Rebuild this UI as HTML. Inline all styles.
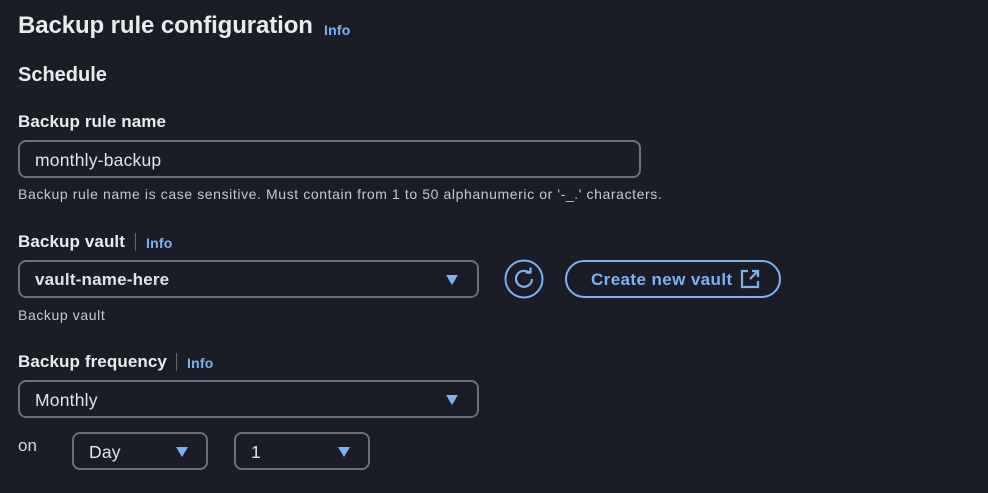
<!DOCTYPE html>
<html><head><style>
body{margin:0;width:988px;height:493px;background:#1a1d25;font-family:"Liberation Sans",sans-serif;color:#e9ebed;position:relative;overflow:hidden}
.a{position:absolute;white-space:nowrap}
.b{font-weight:bold}
.info{color:#7cb1f2;font-weight:bold;font-size:14px;letter-spacing:0.2px}
.box{position:absolute;box-sizing:border-box;border:2px solid #6c7077;border-radius:8px;background:#1a1d25}
.box span{position:absolute;left:15px;top:8px;font-size:17.5px;color:#e1e3e6;letter-spacing:0.2px}
.tri{position:absolute;width:0;height:0;border-left:6.5px solid transparent;border-right:6.5px solid transparent;border-top:10px solid #7cb1f2}
.hint{font-size:14px;color:#c6c8cc;letter-spacing:0.6px}
.lbl{font-weight:bold;font-size:17px;letter-spacing:0.1px}
.div{position:absolute;width:1px;height:18px;background:#5f6670}
</style></head><body>
<div class="a b" style="left:18px;top:12px;font-size:24px;letter-spacing:-0.1px">Backup rule configuration</div>
<div class="a info" style="left:324px;top:22px">Info</div>
<div class="a b" style="left:18px;top:64px;font-size:20px">Schedule</div>
<div class="a lbl" style="left:18px;top:112px">Backup rule name</div>
<div class="box" style="left:18px;top:140px;width:623px;height:38px"><span>monthly-backup</span></div>
<div class="a hint" style="left:18px;top:186px">Backup rule name is case sensitive. Must contain from 1 to 50 alphanumeric or '-_.' characters.</div>
<div class="a lbl" style="left:18px;top:232px">Backup vault</div>
<div class="div" style="left:135px;top:233px"></div>
<div class="a info" style="left:146px;top:235px">Info</div>
<div class="box" style="left:18px;top:260px;width:461px;height:38px"><span style="font-weight:bold;font-size:17px">vault-name-here</span><div class="tri" style="left:426px;top:13px"></div></div>
<svg class="a" style="left:504px;top:259px" width="40" height="40" viewBox="0 0 40 40"><circle cx="20" cy="20" r="18.5" fill="none" stroke="#7cb1f2" stroke-width="2"/><path d="M26 14.5A8 8 0 1 0 28 20" fill="none" stroke="#7cb1f2" stroke-width="2.2"/><path d="M21.5 13.5h5v-5" fill="none" stroke="#7cb1f2" stroke-width="2.2"/></svg>
<div class="a" style="left:565px;top:260px;width:216px;height:38px;box-sizing:border-box;border:2px solid #7cb1f2;border-radius:20px"></div>
<div class="a b" style="left:591px;top:270px;font-size:17px;letter-spacing:0.4px;color:#7cb1f2">Create new vault</div>
<svg class="a" style="left:740px;top:269px" width="20" height="20" viewBox="0 0 20 20"><path d="M8 2H2v16h16v-6" fill="none" stroke="#7cb1f2" stroke-width="2.2"/><path d="M12 2h6v6M18 2l-8 8" fill="none" stroke="#7cb1f2" stroke-width="2.2"/></svg>
<div class="a hint" style="left:18px;top:307px">Backup vault</div>
<div class="a lbl" style="left:18px;top:352px">Backup frequency</div>
<div class="div" style="left:176px;top:353px"></div>
<div class="a info" style="left:187px;top:355px">Info</div>
<div class="box" style="left:18px;top:380px;width:461px;height:38px"><span>Monthly</span><div class="tri" style="left:426px;top:13px"></div></div>
<div class="a" style="left:18px;top:436px;font-size:17px;color:#d5d7da">on</div>
<div class="box" style="left:72px;top:432px;width:136px;height:38px"><span>Day</span><div class="tri" style="left:102px;top:13px"></div></div>
<div class="box" style="left:234px;top:432px;width:136px;height:38px"><span>1</span><div class="tri" style="left:102px;top:13px"></div></div>
</body></html>
